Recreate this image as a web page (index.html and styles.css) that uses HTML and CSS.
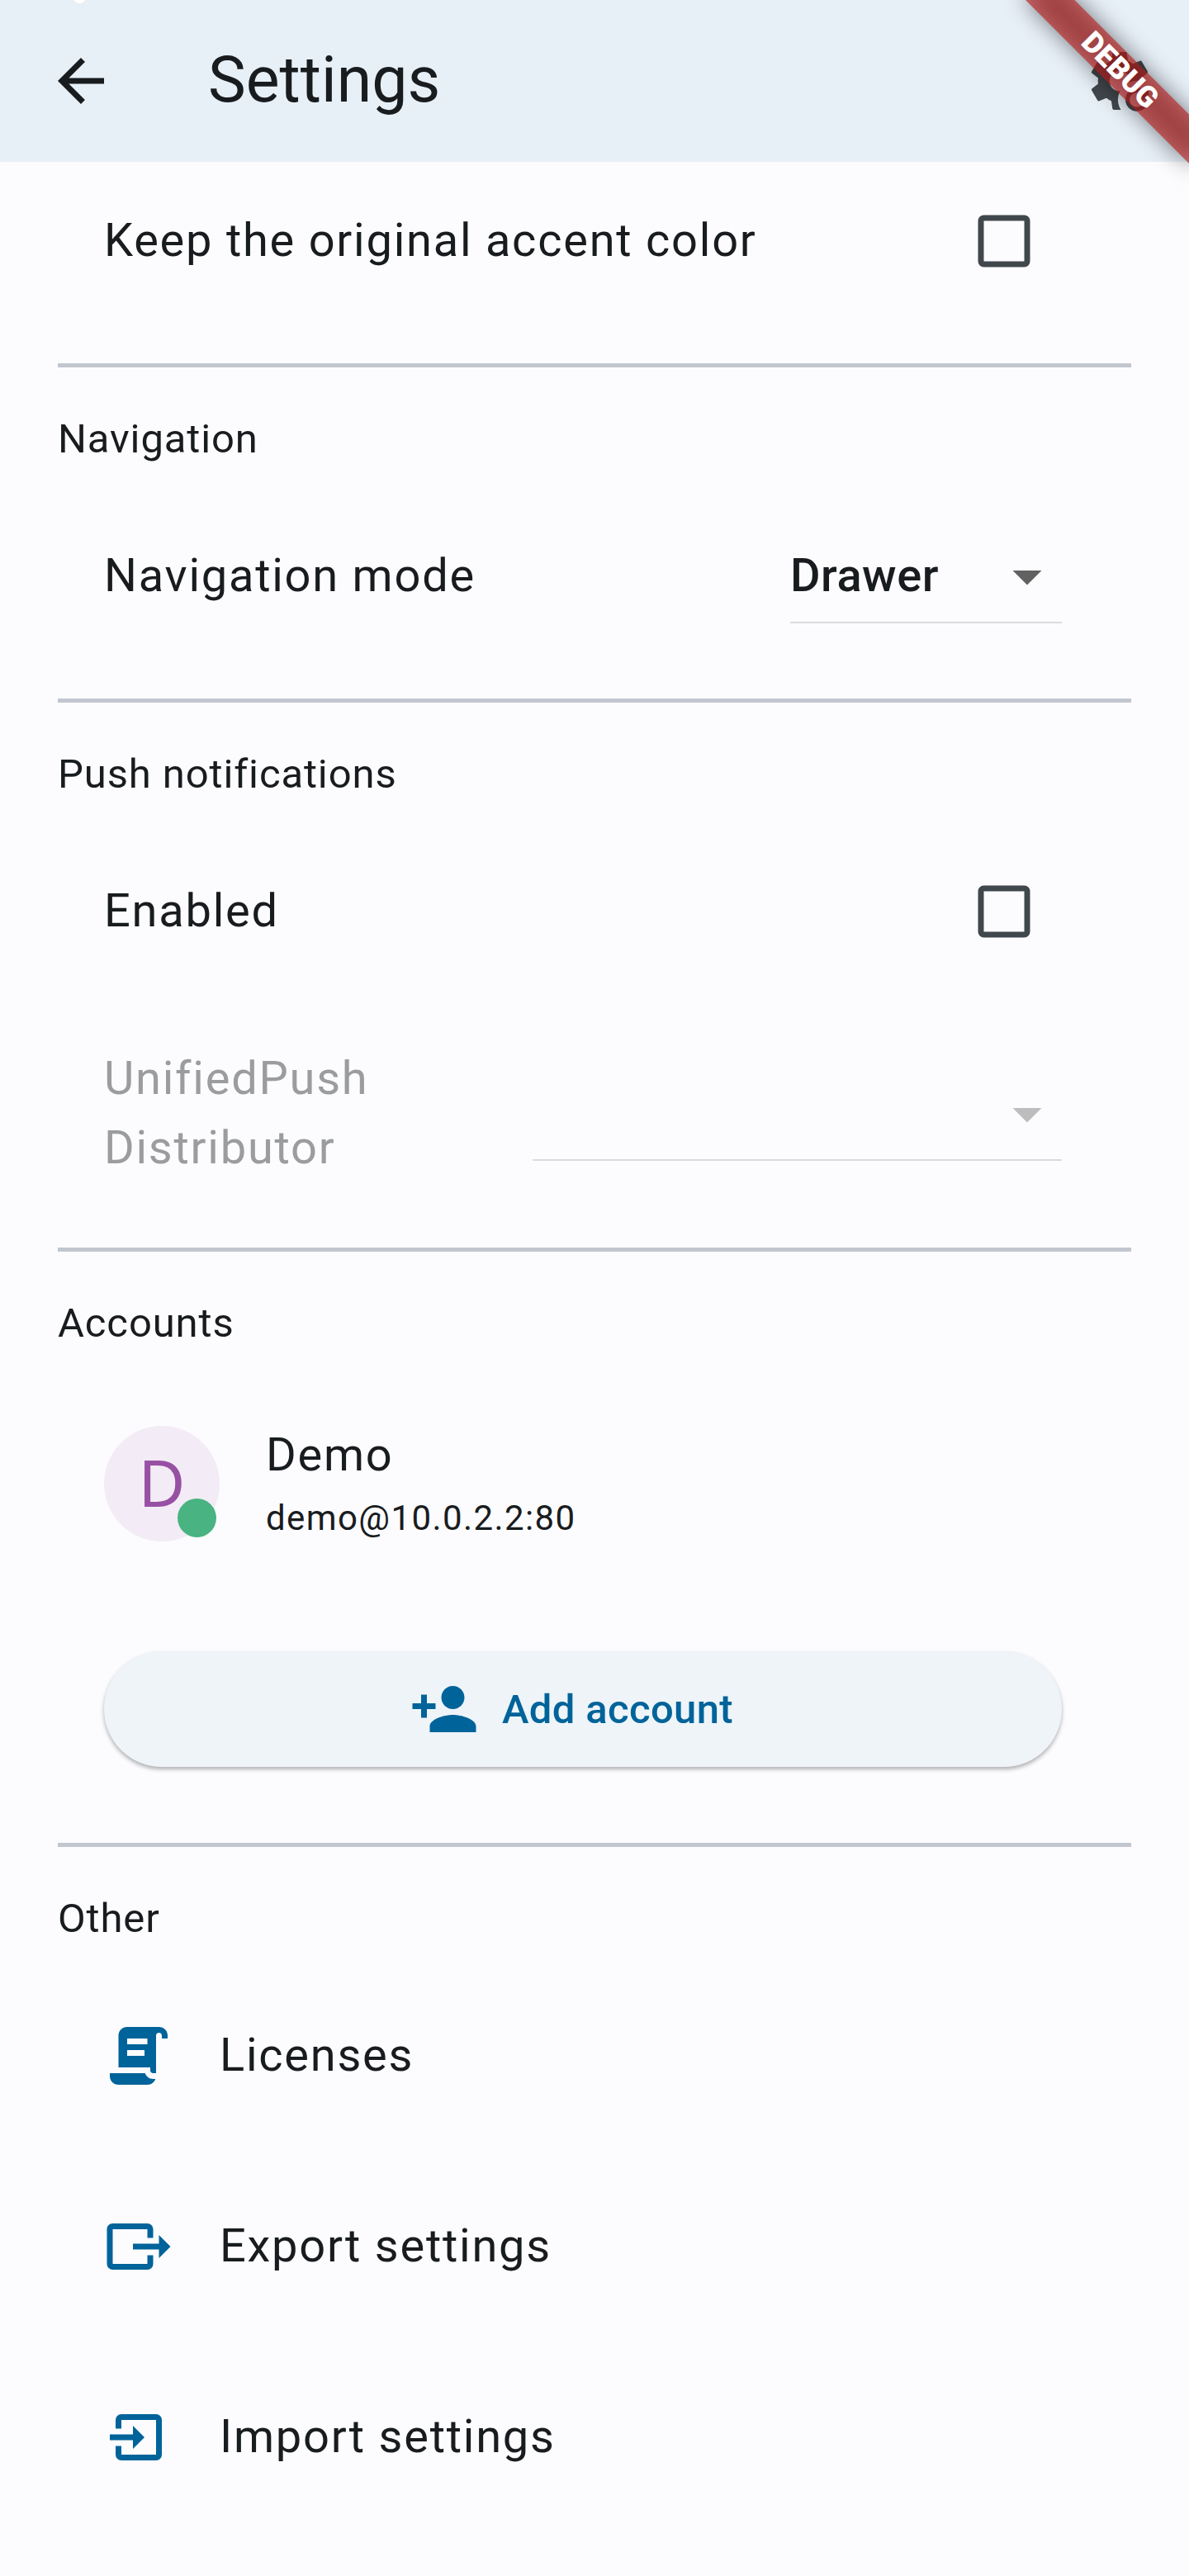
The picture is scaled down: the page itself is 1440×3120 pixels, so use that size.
FILE: index.html
```html
<!DOCTYPE html>
<html lang="en">
<head>
<meta charset="utf-8">
<title>Settings</title>
<link rel="stylesheet" href="styles.css">
</head>
<body>
<div class="screen">
  <header class="app-bar">
    <span class="status-mark"></span>
    <svg class="icon icon-dark" viewBox="0 0 24 24"><path d="M20 11H7.83l5.59-5.59L12 4l-8 8 8 8 1.41-1.41L7.83 13H20v-2z"/></svg>
    <h1 class="app-title">Settings</h1>
    <svg class="icon icon-muted" viewBox="0 0 24 24">
      <mask id="cog-cut"><rect width="24" height="24" fill="#fff"/><circle cx="18" cy="18.5" r="6.6" fill="#000"/></mask>
      <path mask="url(#cog-cut)" d="M12,15.5A3.5,3.5 0 0,1 8.5,12A3.5,3.5 0 0,1 12,8.5A3.5,3.5 0 0,1 15.5,12A3.5,3.5 0 0,1 12,15.5M19.43,12.97C19.47,12.65 19.5,12.33 19.5,12C19.5,11.67 19.47,11.34 19.43,11L21.54,9.37C21.73,9.22 21.78,8.95 21.66,8.73L19.66,5.27C19.54,5.05 19.27,4.96 19.05,5.05L16.56,6.05C16.04,5.66 15.5,5.32 14.87,5.07L14.5,2.42C14.46,2.18 14.25,2 14,2H10C9.75,2 9.54,2.18 9.5,2.42L9.13,5.07C8.5,5.32 7.96,5.66 7.44,6.05L4.95,5.05C4.73,4.96 4.46,5.05 4.34,5.27L2.34,8.73C2.21,8.95 2.27,9.22 2.46,9.37L4.57,11C4.53,11.34 4.5,11.67 4.5,12C4.5,12.33 4.53,12.65 4.57,12.97L2.46,14.63C2.27,14.78 2.21,15.05 2.34,15.27L4.34,18.73C4.46,18.95 4.73,19.03 4.95,18.95L7.44,17.94C7.96,18.34 8.5,18.68 9.13,18.93L9.5,21.58C9.54,21.82 9.75,22 10,22H14C14.25,22 14.46,21.82 14.5,21.58L14.87,18.93C15.5,18.67 16.04,18.34 16.56,17.94L19.05,18.95C19.27,19.03 19.54,18.95 19.66,18.73L21.66,15.27C21.78,15.05 21.73,14.78 21.54,14.63L19.43,12.97Z"/>
      <path d="M18 14.5C19.11 14.5 20.11 14.95 20.83 15.67L22 14.5V18.5H18L19.77 16.73C19.32 16.28 18.69 16 18 16C16.62 16 15.5 17.12 15.5 18.5C15.5 19.88 16.62 21 18 21C18.82 21 19.55 20.61 20 20H21.71C21.12 21.47 19.68 22.5 18 22.5C15.79 22.5 14 20.71 14 18.5C14 16.29 15.79 14.5 18 14.5Z"/>
    </svg>
  </header>

  <main class="list">
    <section class="section section-cut">
      <div class="row">
        <span class="label">Keep the original accent color</span>
        <svg class="checkbox" viewBox="0 0 64 64"><rect x="4" y="4" width="56" height="56" rx="3.5"/></svg>
      </div>
    </section>

    <section class="section">
      <h2 class="section-title">Navigation</h2>
      <div class="row">
        <span class="label">Navigation mode</span>
        <div class="select select-narrow">
          <span class="select-value">Drawer</span>
          <svg class="icon icon-caret" viewBox="0 0 24 24"><path d="M7 10l5 5 5-5z"/></svg>
        </div>
      </div>
    </section>

    <section class="section">
      <h2 class="section-title">Push notifications</h2>
      <div class="row">
        <span class="label">Enabled</span>
        <svg class="checkbox" viewBox="0 0 64 64"><rect x="4" y="4" width="56" height="56" rx="3.5"/></svg>
      </div>
      <div class="row row-two-line">
        <span class="label label-disabled">UnifiedPush<br>Distributor</span>
        <div class="select select-wide">
          <svg class="icon icon-caret icon-caret-disabled" viewBox="0 0 24 24"><path d="M7 10l5 5 5-5z"/></svg>
        </div>
      </div>
    </section>

    <section class="section">
      <h2 class="section-title">Accounts</h2>
      <div class="row row-account">
        <div class="avatar">D<span class="online"></span></div>
        <div class="account">
          <span class="account-name">Demo</span>
          <span class="account-id">demo@10.0.2.2:80</span>
        </div>
      </div>
      <div class="row row-button">
        <button class="button" type="button">
          <svg class="icon" viewBox="0 0 24 24"><path d="M15 12c2.21 0 4-1.79 4-4s-1.79-4-4-4-4 1.79-4 4 1.79 4 4 4zm-9-2V7H4v3H1v2h3v3h2v-3h3v-2H6zm9 4c-2.67 0-8 1.34-8 4v2h16v-2c0-2.66-5.33-4-8-4z"/></svg>
          <span class="button-label">Add account</span>
        </button>
      </div>
    </section>

    <section class="section">
      <h2 class="section-title">Other</h2>
      <div class="row row-link">
        <svg class="icon icon-primary" viewBox="0 0 24 24"><path d="M17.8 20C17.4 21.2 16.3 22 15 22H5C3.3 22 2 20.7 2 19V18H14.2C14.6 19.2 15.7 20 17 20H17.8M19 2C20.7 2 22 3.3 22 5V6H20V5C20 4.4 19.6 4 19 4S18 4.4 18 5V18H17C16.4 18 16 17.6 16 17V16H5V5C5 3.3 6.3 2 8 2H19M8 6V8H15V6H8M8 10V12H14V10H8Z"/></svg>
        <span class="label">Licenses</span>
      </div>
      <div class="row row-link">
        <svg class="icon icon-primary" viewBox="0 0 24 24"><path d="M23,12L19,8V11H10V13H19V16M1,18V6C1,4.89 1.9,4 3,4H15A2,2 0 0,1 17,6V9H15V6H3V18H15V15H17V18A2,2 0 0,1 15,20H3A2,2 0 0,1 1,18Z"/></svg>
        <span class="label">Export settings</span>
      </div>
      <div class="row row-link">
        <svg class="icon icon-primary" viewBox="0 0 24 24"><path d="M14,12L10,8V11H2V13H10V16M20,18V6C20,4.89 19.1,4 18,4H6A2,2 0 0,0 4,6V9H6V6H18V18H6V15H4V18A2,2 0 0,0 6,20H18A2,2 0 0,0 20,18Z"/></svg>
        <span class="label">Import settings</span>
      </div>
    </section>
  </main>

  <div class="banner">
    <div class="banner-shadow"></div>
    <div class="banner-ribbon">DEBUG</div>
  </div>
</div>
</body>
</html>
```
FILE: styles.css
```css
* {
  box-sizing: border-box;
}

body {
  margin: 0;
  background: #fcfcff;
  color: #191c1e;
  font-family: Roboto, "Liberation Sans", sans-serif;
}

.screen {
  position: relative;
  width: 1440px;
  height: 3120px;
  overflow: hidden;
}

.icon {
  flex: none;
  width: 84px;
  height: 84px;
  fill: currentColor;
}

.icon-dark { color: #191c1e; }
.icon-muted { color: #41484d; margin-left: auto; }
.icon-primary { color: #00639a; margin-top: 2px; }
.icon-caret { color: #616161; margin: 4px 0 0 auto; }
.icon-caret-disabled { color: #bdbdbd; }

/* App bar */

.app-bar {
  position: relative;
  display: flex;
  align-items: center;
  height: 196px;
  padding: 0 42px 0 56px;
  overflow: hidden;
  background: #e7eff7;
}

.status-mark {
  position: absolute;
  top: -14px;
  left: 89px;
  width: 15px;
  height: 18px;
  border: 4px solid #fff;
  border-radius: 8px;
}

.app-title {
  margin: 0 0 2px 112px;
  font-size: 77px;
  font-weight: 400;
  line-height: 98px;
}

/* Settings list */

.list {
  padding: 0 70px;
}

.section {
  display: flex;
  flex-direction: column;
  gap: 35px;
  padding: 52px 0 51px;
  border-top: 5px solid #c2c6cf;
}

.section-cut {
  height: 244px;
  padding: 0;
  margin-top: -3px;
  margin-bottom: 3px;
  border-top: 0;
}

.section-title {
  margin: 0 0 -3px;
  font-size: 49px;
  font-weight: 400;
  letter-spacing: 0.875px;
  line-height: 70px;
}

.row {
  display: flex;
  flex: none;
  align-items: center;
  justify-content: space-between;
  height: 196px;
  padding: 0 84px 0 56px;
}

.row-two-line { height: 224px; }
.row-account { height: 254px; justify-content: flex-start; gap: 56px; }
.row-button { height: 222px; }
.row-link { justify-content: flex-start; gap: 56px; }

.label {
  font-size: 56px;
  letter-spacing: 1.75px;
  line-height: 84px;
}

.label-disabled {
  color: #9b9c9e;
}

.checkbox {
  width: 64px;
  height: 64px;
  margin: 2px 38px 0 0;
  fill: none;
  stroke: #41484d;
  stroke-width: 7px;
}

.select {
  display: flex;
  align-items: center;
  height: 116px;
  border-bottom: 2px solid #dbdbde;
}

.select-narrow { width: 329px; }
.select-wide { width: 641px; }

.select-value {
  margin-top: 2px;
  font-size: 56px;
  font-weight: 500;
  letter-spacing: 0.525px;
  line-height: 84px;
}

/* Account tile */

.avatar {
  position: relative;
  display: flex;
  align-items: center;
  justify-content: center;
  width: 140px;
  height: 140px;
  padding-bottom: 4px;
  border-radius: 50%;
  background: #f3ebf5;
  color: #9750a4;
  font-family: "Noto Sans", sans-serif;
  font-size: 78px;
  line-height: 106px;
}

.online {
  position: absolute;
  right: 4px;
  bottom: 5px;
  width: 47px;
  height: 47px;
  border-radius: 50%;
  background: #49b382;
}

.account {
  display: flex;
  flex-direction: column;
}

.account-name {
  font-size: 56px;
  letter-spacing: 1.75px;
  line-height: 84px;
}

.account-id {
  font-size: 42px;
  letter-spacing: 1.4px;
  line-height: 70px;
}

.button {
  display: flex;
  flex: 1;
  align-items: center;
  justify-content: center;
  gap: 28px;
  height: 140px;
  padding: 0 84px 0 56px;
  border: 0;
  border-radius: 70px;
  background: #eef4f8;
  box-shadow: 0 3px 5px rgba(0, 0, 0, 0.3);
  color: #00639a;
  font: 500 49px/70px Roboto, "Liberation Sans", sans-serif;
  letter-spacing: 0.35px;
}

.button-label {
  margin-top: 2px;
}

/* Corner ribbon, rotated about the top right corner of the screen */

.banner {
  position: absolute;
  top: 0;
  left: 1300px;
  width: 280px;
  height: 140px;
  padding-top: 98px;
  transform: rotate(45deg);
  transform-origin: 50% 0;
}

.banner-shadow {
  position: absolute;
  top: 98px;
  left: 0;
  width: 280px;
  height: 42px;
  background: rgba(0, 0, 0, 0.5);
  filter: blur(13.9px);
}

.banner-ribbon {
  position: relative;
  height: 42px;
  padding-left: 2px;
  background: rgba(183, 28, 28, 0.627);
  color: #fff;
  font-size: 35.7px;
  font-weight: 900;
  line-height: 42px;
  text-align: center;
}
```
